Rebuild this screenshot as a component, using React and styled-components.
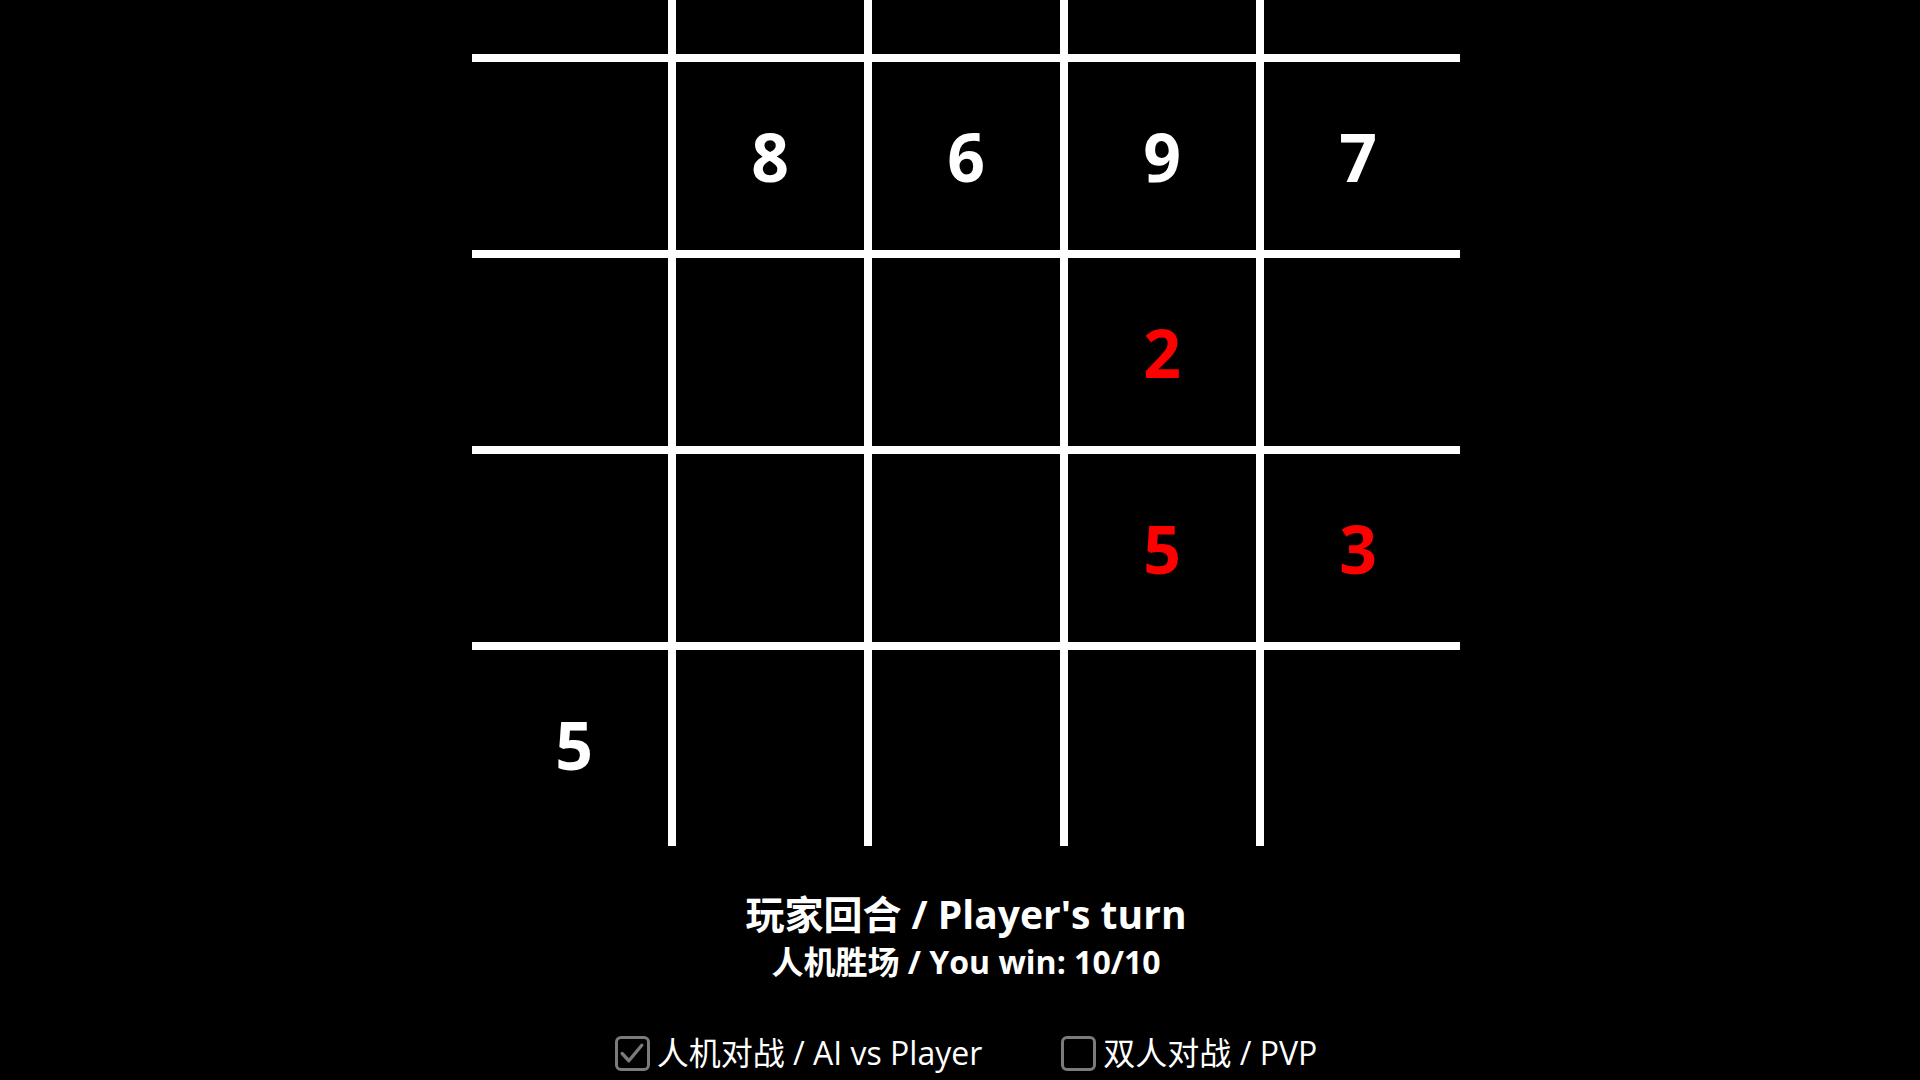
import React from 'react';
import styled, { createGlobalStyle } from 'styled-components';

const CELL = 196;
const SIZE = 5;
const LINE = 8;

// value and colour of each cell, row by row (top row lies off screen)
const board = [
  [null, null, null, null, null],
  [null, { v: 8 }, { v: 6 }, { v: 9 }, { v: 7 }],
  [null, null, null, { v: 2, red: true }, null],
  [null, null, null, { v: 5, red: true }, { v: 3, red: true }],
  [{ v: 5 }, null, null, null, null]
];

const GlobalStyle = createGlobalStyle`
  html, body {
    margin: 0;
    padding: 0;
    background: #000;
    overflow: hidden;
  }
  body {
    font-family: "Open Sans", "Noto Sans CJK SC", sans-serif;
    color: #fff;
  }
`;

const Page = styled.div`
  width: 1920px;
  height: 1080px;
  display: flex;
  flex-direction: column;
  align-items: center;
  padding-left: 12px;
  box-sizing: border-box;
  overflow: hidden;
`;

const Board = styled.div`
  position: relative;
  margin-top: -138px;
  display: grid;
  grid-template-columns: repeat(${SIZE}, ${CELL}px);
  grid-template-rows: repeat(${SIZE}, ${CELL}px);
  flex-shrink: 0;
`;

const Cell = styled.div`
  display: flex;
  align-items: center;
  justify-content: center;
  font-family: "Open Sans", sans-serif;
  font-weight: 700;
  font-size: 66px;
  line-height: 1;
  color: ${props => (props.red ? '#ff0000' : '#ffffff')};
`;

const Lines = styled.svg`
  position: absolute;
  left: 0;
  top: 0;
  overflow: visible;
  pointer-events: none;
`;

const Status = styled.div`
  margin-top: 48px;
  display: flex;
  flex-direction: column;
  align-items: center;
  font-weight: 700;
`;

const Title = styled.div`
  font-size: 39px;
  line-height: 48px;
`;

const Sub = styled.div`
  font-size: 32px;
  line-height: 47px;
`;

const Modes = styled.div`
  margin-top: 49px;
  display: flex;
  gap: 79px;
  align-items: center;
`;

const Option = styled.label`
  display: flex;
  align-items: center;
  gap: 7px;
  font-size: 32px;
  line-height: 38px;
  color: #fff;
`;

const Box = styled.span`
  width: 35px;
  height: 35px;
  box-sizing: border-box;
  border: 3px solid #7b7b7b;
  border-radius: 6px;
  display: flex;
  align-items: center;
  justify-content: center;
`;

function Check() {
  return (
    <svg width="29" height="29" viewBox="0 0 28 28">
      <path d="M4 14 L10.5 21 L23 6" fill="none" stroke="#7b7b7b" strokeWidth="3.2" strokeLinecap="round" strokeLinejoin="round" />
    </svg>
  );
}

function GridLines() {
  const total = CELL * SIZE;
  const ext = LINE / 2;
  const lines = [];
  for (let i = 1; i < SIZE; i++) {
    const p = i * CELL;
    lines.push(<line key={'h' + i} x1={-ext} y1={p} x2={total + ext} y2={p} />);
    lines.push(<line key={'v' + i} x1={p} y1={-ext} x2={p} y2={total + ext} />);
  }
  return (
    <Lines width={total} height={total}>
      <g stroke="#ffffff" strokeWidth={LINE}>{lines}</g>
    </Lines>
  );
}

export default function App() {
  return (
    <Page>
      <GlobalStyle />
      <Board>
        {board.map((row, r) =>
          row.map((c, i) => (
            <Cell key={r + '-' + i} red={c && c.red ? 1 : 0}>
              {c ? c.v : ''}
            </Cell>
          ))
        )}
        <GridLines />
      </Board>
      <Status>
        <Title>玩家回合 / Player's turn</Title>
        <Sub>人机胜场 / You win: 10/10</Sub>
      </Status>
      <Modes>
        <Option>
          <Box><Check /></Box>
          人机对战 / AI vs Player
        </Option>
        <Option>
          <Box />
          双人对战 / PVP
        </Option>
      </Modes>
    </Page>
  );
}
